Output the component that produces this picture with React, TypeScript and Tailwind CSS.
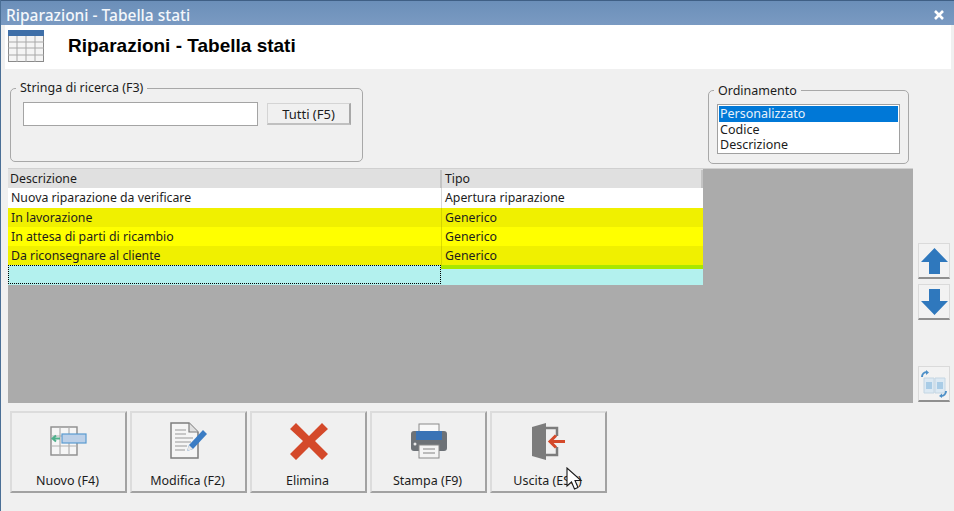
import React from 'react';

const uiFont = 'font-["Noto_Sans",sans-serif]';

const TableIcon = () => (
  <svg width="37" height="33" viewBox="0 0 37 33">
    <rect x="0.5" y="0.5" width="35" height="31" fill="#f4f4f4" stroke="#8a8a8a" />
    <rect x="0" y="0" width="36" height="6" fill="#3f6fa8" />
    <path d="M0 12h36M0 18h36M0 25h36M9 6v26M18 6v26M27 6v26" stroke="#a8a8a8" strokeWidth="1" fill="none" />
  </svg>
);

const NewIcon = () => (
  <svg width="38" height="32" viewBox="0 0 38 32">
    <rect x="1" y="2" width="26" height="28" fill="#f6f6f6" stroke="#8c8c8c" strokeWidth="1.4" />
    <path d="M1 11h26M1 21h26M10 2v28M19 2v28" stroke="#b0b0b0" strokeWidth="1.2" fill="none" />
    <rect x="12" y="9" width="24" height="9" fill="#bcd0e8" stroke="#5a9bd0" strokeWidth="1.2" />
    <path d="M10 13.500H3M6 10.500l-3.500 3 3.500 3" stroke="#4fb08c" strokeWidth="2" fill="none" />
  </svg>
);

const EditIcon = () => (
  <svg width="38" height="38" viewBox="0 0 38 38">
    <path d="M1 1h18l9 9v26H1z" fill="#f5f5f5" stroke="#7e7e7e" strokeWidth="1.5" />
    <path d="M19 1v9h9" fill="#e0e0e0" stroke="#7e7e7e" strokeWidth="1.2" />
    <path d="M5 8h11M5 12h11M5 16h18M5 20h16M5 24h12M5 28h10" stroke="#b8b8b8" strokeWidth="1.300" fill="none" />
    <path d="M33 8l4 4-14 15-6 2 2-6z" fill="#3a7cc4" />
    <path d="M17 29l2-6 4 4z" fill="#e6e6e6" />
  </svg>
);

const DeleteIcon = () => (
  <svg width="38" height="38" viewBox="0 0 38 38">
    <path d="M6 1l13 13L32 1l6 6-13 12 13 13-6 6-13-13L6 38l-6-6 13-13L0 7z" fill="#d4492a" />
  </svg>
);

const PrintIcon = () => (
  <svg width="38" height="36" viewBox="0 0 38 36">
    <rect x="9" y="1" width="20" height="12" fill="#f8f8f8" stroke="#8a8a8a" />
    <path d="M4 8h30a3 3 0 0 1 3 3v14a3 3 0 0 1-3 3H4a3 3 0 0 1-3-3V11a3 3 0 0 1 3-3z" fill="#6d7277" />
    <rect x="6" y="8" width="26" height="9" fill="#3a73b5" />
    <rect x="9" y="22" width="20" height="13" fill="#f4f4f4" stroke="#8a8a8a" />
    <path d="M13 26h12M13 30h12" stroke="#a8a8a8" strokeWidth="1.300" />
    <circle cx="5" cy="21" r="1.500" fill="#e8e8e8" />
  </svg>
);

const ExitIcon = () => (
  <svg width="34" height="37" viewBox="0 0 34 37">
    <path d="M14 5h11v8M25 24v8H14" stroke="#7c7c7c" strokeWidth="2.500" fill="none" />
    <path d="M0 4l14-4v37L0 33z" fill="#7c7c7c" />
    <path d="M33 18.500H18M24 12.500l-6 6 6 6" stroke="#d4492a" strokeWidth="3" fill="none" />
  </svg>
);

const ArrowUp = () => (
  <svg width="27" height="26" viewBox="0 0 27 26">
    <path d="M13.500 0L27 14h-8v12H8V14H0z" fill="#2f78bd" />
  </svg>
);

const ArrowDown = () => (
  <svg width="27" height="26" viewBox="0 0 27 26">
    <path d="M13.500 26L27 12h-8V0H8v12H0z" fill="#2f78bd" />
  </svg>
);

const SwapIcon = () => (
  <svg width="28" height="28" viewBox="0 0 28 28">
    <path d="M4 8h10v15H4zM15 8h10v15H15z" fill="#dce9f3" stroke="#c4d6e3" strokeWidth="1" />
    <path d="M6 12h6v7H6zM17 12h6v7h-6z" fill="#a9cce6" />
    <path d="M2 7a5 5 0 0 1 5-5" stroke="#4c8fc7" strokeWidth="2" fill="none" />
    <path d="M6 0l3 2.500L6 5z" fill="#4c8fc7" />
    <path d="M26 21a5 5 0 0 1-5 5" stroke="#4c8fc7" strokeWidth="2" fill="none" />
    <path d="M22 23.500L19 26l3 2z" fill="#4c8fc7" />
  </svg>
);

const Cursor = () => (
  <svg width="19" height="25" viewBox="0 0 19 25" className="absolute left-[565px] top-[467px]">
    <path d="M1 1v18l4.500-4 3 7 3.500-1.500-3-7H15z" fill="#ffffff" stroke="#1a1a1a" strokeWidth="1.100" />
  </svg>
);

const GroupBox = ({ title, className, legendTop, children }: { title: string; className: string; legendTop: string; children: React.ReactNode }) => (
  <div className={`relative rounded-[5px] border border-[#a8a8a8] ${className}`}>
    <span className={`absolute left-[5px] bg-[#f0f0f0] px-[4px] text-[12.500px] leading-[17px] text-[#1c1c1c] ${legendTop}`}>{title}</span>
    {children}
  </div>
);

const ToolButton = ({ label, children }: { label: string; children: React.ReactNode }) => (
  <button className="flex h-[82px] w-[117px] flex-col items-center border-t-2 border-r-2 border-b-2 border-l-2 border-t-[#dcdcdc] border-r-[#a2a2a2] border-b-[#a2a2a2] border-l-[#dcdcdc] bg-[#f0f0f0] text-[12.500px] text-[#1c1c1c]">
    <div className="flex h-[52px] items-center pt-[4px]">{children}</div>
    <span className="mt-[8px] pr-[2px] leading-[16px]">{label}</span>
  </button>
);

const SideButton = ({ children }: { children: React.ReactNode }) => (
  <button className="flex h-[36px] w-[32px] items-center justify-center border border-b-2 border-[#dadada] border-b-[#8f8f8f] bg-[#f2f2f2]">
    {children}
  </button>
);

const rows = [
  { name: 'Nuova riparazione da verificare', type: 'Apertura riparazione', bg: 'bg-white', h: 'h-[20px]', line: 'border-[#d8d8d8]' },
  { name: 'In lavorazione', type: 'Generico', bg: 'bg-[#f0f000]', h: 'h-[19px]', line: 'border-[#d4d400]' },
  { name: 'In attesa di parti di ricambio', type: 'Generico', bg: 'bg-[#ffff00]', h: 'h-[19px]', line: 'border-[#dcdc00]' },
  { name: 'Da riconsegnare al cliente', type: 'Generico', bg: 'bg-[#f0f000]', h: 'h-[19px]', line: 'border-[#d4d400]' },
];

export default function App() {
  return (
    <div className={`relative flex h-[511px] w-[954px] flex-col overflow-hidden border-l border-[#4a6f96] bg-[#f0f0f0] ${uiFont}`}>
      <div className="flex h-[25px] items-center justify-between border-t border-[#3f5f85] bg-gradient-to-b from-[#6b8fb9] to-[#7a9ac2] pr-[9px] pl-[5px] pt-[3px]">
        <span className="text-[15.500px] leading-[20px] font-medium text-[#f4f7fb]">Riparazioni - Tabella stati</span>
        <span className="flex h-[12px] w-[12px] items-center justify-center">
          <svg width="10" height="10" viewBox="0 0 10 10">
            <path d="M1 1l8 8M9 1l-8 8" stroke="#ffffff" strokeWidth="2.600" />
          </svg>
        </span>
      </div>

      <div className="mr-[3px] ml-[4px] flex h-[44px] items-start bg-white">
        <div className="ml-[3px] mt-[5px]">
          <TableIcon />
        </div>
        <h1 className='ml-[23px] mt-[9px] font-["Liberation_Sans",sans-serif] text-[19px] leading-[24px] font-bold text-black'>Riparazioni - Tabella stati</h1>
      </div>

      <div className="flex items-start justify-between pt-[19px] pr-[44px] pl-[9px]">
        <GroupBox title="Stringa di ricerca (F3)" legendTop="top-[-10px]" className="h-[74px] w-[353px]">
          <div className="flex items-center pt-[13px] pl-[12px]">
            <input className="h-[24px] w-[235px] border border-[#a4a4a4] bg-white" />
            <button className="ml-[9px] h-[22px] w-[84px] border border-r-2 border-b-2 border-[#d4d4d4] border-r-[#a8a8a8] border-b-[#c0c0c0] bg-[#f0f0f0] text-[13px] leading-[18px] text-[#1c1c1c]">
              Tutti (F5)
            </button>
          </div>
        </GroupBox>
        <GroupBox title="Ordinamento" legendTop="top-[-9px]" className="mt-[2px] h-[74px] w-[201px] -translate-x-px">
          <div className="mx-[8px] mt-[13px] h-[50px] border border-[#a0a0a0] bg-white p-[1px] text-[12.500px] leading-[15.500px] text-[#1c1c1c]">
            <div className="bg-[#0078d7] pl-[1px] text-[#e8f2fb]">Personalizzato</div>
            <div className="pl-[1px]">Codice</div>
            <div className="pl-[1px]">Descrizione</div>
          </div>
        </GroupBox>
      </div>

      <div className="mt-[4px] flex pl-[7px]">
        <div className="h-[235px] w-[905px] border-t border-[#d0d0d0] bg-[#ababab] text-[12.300px] leading-[18px] text-[#1c1c1c]">
          <div className="w-[695px]">
            <div className="flex h-[19px] bg-[#e0e0e0] pt-[1px]">
              <div className="w-[434px] border-r-2 border-[#c4c4c4] pl-[2px]">Descrizione</div>
              <div className="flex-1 border-r-2 border-[#c4c4c4] pl-[3px]">Tipo</div>
            </div>
            {rows.map((r) => (
              <div key={r.name} className={`flex ${r.h} ${r.bg}`}>
                <div className={`h-full w-[434px] border-r ${r.line} pt-[1px] pl-[3px]`}>{r.name}</div>
                <div className="h-full flex-1 pt-[1px] pl-[3px]">{r.type}</div>
              </div>
            ))}
            <div className="flex h-[20px] bg-[#b3f1ee]">
              <div className="h-[19px] w-[433px] border border-dotted border-black bg-[#b3f1ee]"></div>
              <div className="flex-1">
                <div className="h-[4px] bg-[#a8e800]"></div>
              </div>
            </div>
          </div>
        </div>
        <div className="ml-[5px] flex flex-col gap-[5px] pt-[75px]">
          <SideButton>
            <ArrowUp />
          </SideButton>
          <SideButton>
            <ArrowDown />
          </SideButton>
          <div className="mt-[41px]">
            <SideButton>
              <SwapIcon />
            </SideButton>
          </div>
        </div>
      </div>

      <div className="mt-[8px] flex gap-[3px] pl-[9px]">
        <ToolButton label="Nuovo (F4)">
          <NewIcon />
        </ToolButton>
        <ToolButton label="Modifica (F2)">
          <EditIcon />
        </ToolButton>
        <ToolButton label="Elimina">
          <DeleteIcon />
        </ToolButton>
        <ToolButton label="Stampa (F9)">
          <PrintIcon />
        </ToolButton>
        <ToolButton label="Uscita (ESC)">
          <ExitIcon />
        </ToolButton>
      </div>

      <Cursor />
    </div>
  );
}
